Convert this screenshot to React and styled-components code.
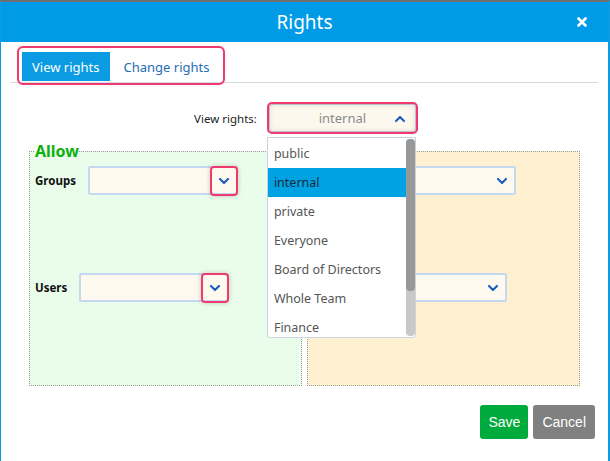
import React from "react";
import styled, { createGlobalStyle } from "styled-components";
import { ChevronDown, ChevronUp, X } from "lucide-react";

const Global = createGlobalStyle`
  html, body { margin: 0; padding: 0; background: #fff; }
  body { font-family: "Segoe UI", "Noto Sans", "Open Sans", sans-serif; }
  * { box-sizing: border-box; }
`;

const Dialog = styled.div`
  width: 610px;
  height: 461px;
  border-top: 2px solid #6f6f6f;
  border-left: 1px solid #0b9be3;
  border-right: 2px solid #0b9be3;
  display: flex;
  flex-direction: column;
  position: relative;
  background: #fff;
`;

const Header = styled.div`
  height: 40px;
  background: #009be6;
  color: #fff;
  display: flex;
  align-items: center;
  justify-content: center;
  position: relative;
  font-size: 19px;
`;

const Close = styled.span`
  position: absolute;
  right: 19px;
  top: 13px;
  display: flex;
`;

const Body = styled.div`
  flex: 1;
  padding: 0 10px 0 10px;
  display: flex;
  flex-direction: column;
`;

const TabBar = styled.div`
  border-bottom: 1px solid #d2dbe3;
  padding: 6px 0 0 8px;
  height: 41px;
`;

const TabList = styled.div`
  display: inline-flex;
  padding: 4px 14px 2px 3px;
  border-radius: 4px;
  outline: 2px solid #ef3a6f;
  box-shadow: 0 0 4px rgba(239, 58, 111, 0.35);
  gap: 14px;
`;

const Tab = styled.div`
  height: 29px;
  display: flex;
  align-items: center;
  padding: 0 ${p => (p.active ? "10px" : "0")};
  font-size: 13px;
  background: ${p => (p.active ? "#0a9be3" : "transparent")};
  color: ${p => (p.active ? "#fff" : "#1f6db5")};
`;

const RightsRow = styled.div`
  display: flex;
  justify-content: center;
  align-items: center;
  gap: 10px;
  margin-top: 19px;
  padding-left: 3px;
  font-size: 11.5px;
  color: #222;
  position: relative;
  z-index: 2;
`;

const SelectWrap = styled.div`
  position: relative;
`;

const MainSelect = styled.div`
  width: 151px;
  height: 32px;
  border: 2px solid #ef3a6f;
  border-radius: 5px;
  box-shadow: inset 0 0 0 1px #b9c2cc, inset 0 0 6px rgba(0, 0, 0, 0.12);
  background: #fdf8ee;
  display: flex;
  align-items: center;
  justify-content: center;
  color: #8a8a8a;
  font-size: 13px;
  position: relative;
`;

const MainChevron = styled.span`
  position: absolute;
  right: 8px;
  top: 7px;
  display: flex;
  color: #1d5fbf;
`;

const List = styled.div`
  position: absolute;
  top: 35px;
  left: 0;
  width: 149px;
  height: 201px;
  background: #fff;
  border: 1px solid #c9d3dd;
  border-radius: 0 0 3px 3px;
  display: flex;
  overflow: hidden;
`;

const Items = styled.div`
  flex: 1;
  padding-top: 1px;
`;

const Item = styled.div`
  height: 29px;
  display: flex;
  align-items: center;
  padding-left: 6px;
  font-size: 12.5px;
  color: ${p => (p.selected ? "#1a2a3a" : "#555")};
  background: ${p => (p.selected ? "#00a2e4" : "transparent")};
`;

const Track = styled.div`
  width: 9px;
  margin: 1px 0 1px 0;
  background: #c8c8c8;
  border-radius: 4px;
  display: flex;
`;

const Thumb = styled.div`
  width: 9px;
  height: 152px;
  background: #989898;
  border-radius: 4px;
`;

const Panels = styled.div`
  display: flex;
  gap: 5px;
  margin: 8px 18px 0 18px;
`;

const Panel = styled.fieldset`
  flex: 1;
  margin: 0;
  height: 244px;
  border: 1px dotted #9a9a9a;
  background: ${p => p.bg};
  padding: 0 5px;
  min-width: 0;
`;

const Legend = styled.legend`
  font-size: 16px;
  font-weight: bold;
  color: #10b010;
  padding: 0;
  line-height: 18px;
`;

const FieldRow = styled.div`
  display: flex;
  align-items: center;
  gap: 12px;
  margin-top: ${p => p.top}px;
  font-size: 11.5px;
  font-weight: bold;
  color: #111;
`;

const Field = styled.div`
  width: 150px;
  height: 29px;
  border: 2px solid #c4d9ef;
  border-radius: 2px;
  background: #fdf9ef;
  position: relative;
`;

const Toggle = styled.span`
  position: absolute;
  right: -2px;
  top: -2px;
  width: 28px;
  height: 30px;
  border-radius: 4px;
  display: flex;
  align-items: center;
  justify-content: center;
  color: #1d5fbf;
  border: 2px solid ${p => (p.focus ? "#ef3a6f" : "transparent")};
  box-shadow: ${p => (p.focus ? "0 0 5px rgba(0,0,0,0.2)" : "none")};
`;

const Footer = styled.div`
  display: flex;
  justify-content: flex-end;
  gap: 5px;
  margin-top: 19px;
  padding-right: 3px;
`;

const Button = styled.button`
  height: 34px;
  border: none;
  border-radius: 3px;
  padding: 0 ${p => p.pad}px;
  background: ${p => p.bg};
  color: #fff;
  font-family: "Liberation Sans", Arial, sans-serif;
  font-size: 14px;
`;

const options = ["public", "internal", "private", "Everyone", "Board of Directors", "Whole Team", "Finance"];

function SelectField({ focus }) {
  return (
    <Field>
      <Toggle focus={focus}>
        <ChevronDown size={16} strokeWidth={3.2} />
      </Toggle>
    </Field>
  );
}

export default function App() {
  return (
    <>
      <Global />
      <Dialog>
        <Header>
          Rights
          <Close>
            <X size={14} strokeWidth={4.5} />
          </Close>
        </Header>
        <Body>
          <TabBar>
            <TabList>
              <Tab active>View rights</Tab>
              <Tab>Change rights</Tab>
            </TabList>
          </TabBar>
          <RightsRow>
            <span>View rights:</span>
            <SelectWrap>
              <MainSelect>
                internal
                <MainChevron>
                  <ChevronUp size={16} strokeWidth={3.2} />
                </MainChevron>
              </MainSelect>
              <List>
                <Items>
                  {options.map(o => (
                    <Item key={o} selected={o === "internal"}>{o}</Item>
                  ))}
                </Items>
                <Track>
                  <Thumb />
                </Track>
              </List>
            </SelectWrap>
          </RightsRow>
          <Panels>
            <Panel bg="#eafcea">
              <Legend>Allow</Legend>
              <FieldRow top={6}>
                <span>Groups</span>
                <SelectField focus />
              </FieldRow>
              <FieldRow top={78}>
                <span>Users</span>
                <SelectField focus />
              </FieldRow>
            </Panel>
            <Panel bg="#fff0d1">
              <Legend>Deny</Legend>
              <FieldRow top={6}>
                <span>Groups</span>
                <SelectField />
              </FieldRow>
              <FieldRow top={78}>
                <span>Users</span>
                <SelectField />
              </FieldRow>
            </Panel>
          </Panels>
          <Footer>
            <Button bg="#00ab3e" pad={8}>Save</Button>
            <Button bg="#808080" pad={9}>Cancel</Button>
          </Footer>
        </Body>
      </Dialog>
    </>
  );
}
